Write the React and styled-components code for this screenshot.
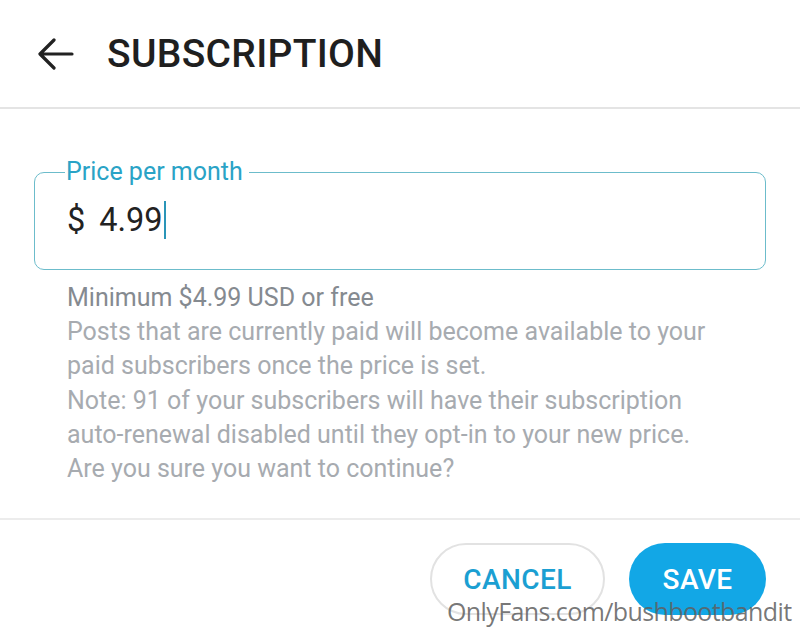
import React from "react";
import styled, { createGlobalStyle } from "styled-components";

const Global = createGlobalStyle`
  html, body { margin: 0; padding: 0; background: #fff; }
  body { font-family: Roboto, "Liberation Sans", sans-serif; }
`;

const Page = styled.div`
  position: relative;
  width: 800px;
  height: 637px;
  overflow: hidden;
  background: #fff;
`;

const Header = styled.div`
  display: flex;
  align-items: center;
  height: 109px;
  padding-left: 38px;
  border-bottom: 2px solid #e4e4e4;
  box-sizing: border-box;
`;

const BackIcon = styled.svg`
  width: 36px;
  height: 34px;
  margin-right: 33px;
`;

const Title = styled.h1`
  margin: 0;
  font-size: 39px;
  font-weight: 500;
  color: #1f1f1f;
  letter-spacing: 0.3px;
`;

const Body = styled.div`
  padding: 50px 34px 0 34px;
  height: 411px;
  box-sizing: border-box;
  border-bottom: 2px solid #ececec;
`;

const Field = styled.fieldset`
  margin: 0;
  height: 111px;
  box-sizing: border-box;
  border: 1.5px solid #6cbccb;
  border-radius: 10px;
  padding: 0 0 0 32px;
`;

const Legend = styled.legend`
  padding: 0 6px 0 1px;
  margin-left: -2px;
  font-size: 25px;
  color: #2aa3c6;
  line-height: 26px;
`;

const Value = styled.div`
  display: flex;
  align-items: center;
  margin-top: 16px;
  font-size: 32.5px;
  color: #222;
`;

const Amount = styled.span`
  margin-left: 14px;
`;

const Caret = styled.span`
  display: inline-block;
  width: 2px;
  height: 38px;
  background: #2a95b8;
  margin-left: 1px;
`;

const Help = styled.div`
  padding: 11px 0 0 33px;
  font-size: 25px;
  line-height: 34.2px;
`;

const HelpLine = styled.div`
  color: ${(p) => (p.$dark ? "#858a90" : "#a7abb0")};
`;

const Footer = styled.div`
  display: flex;
  justify-content: flex-end;
  gap: 24px;
  padding: 23px 34px 0 0;
`;

const Button = styled.button`
  height: 72px;
  border-radius: 36px;
  font-family: Roboto, "Liberation Sans", sans-serif;
  font-size: 28px;
  font-weight: 500;
  letter-spacing: 0.4px;
  padding: 0;
  width: ${(p) => (p.$primary ? "137px" : "175px")};
  background: ${(p) => (p.$primary ? "#12a7e6" : "#fff")};
  color: ${(p) => (p.$primary ? "#fff" : "#1b9fd2")};
  border: ${(p) => (p.$primary ? "none" : "2px solid #e2e2e2")};
`;

const Watermark = styled.div`
  position: absolute;
  left: 447px;
  top: 596px;
  font-family: "Open Sans", "DejaVu Sans", sans-serif;
  font-size: 25px;
  line-height: 30px;
  letter-spacing: -0.6px;
  color: rgba(95, 95, 95, 0.85);
  white-space: nowrap;
`;

export default function App() {
  return (
    <Page>
      <Global />
      <Header>
        <BackIcon viewBox="0 0 36 34" fill="none" stroke="#222" strokeWidth="3.2" strokeLinecap="round" strokeLinejoin="round">
          <path d="M34 17H3M16 3L2 17l14 14" />
        </BackIcon>
        <Title>SUBSCRIPTION</Title>
      </Header>
      <Body>
        <Field>
          <Legend>Price per month</Legend>
          <Value>
            $<Amount>4.99</Amount>
            <Caret />
          </Value>
        </Field>
        <Help>
          <HelpLine $dark>Minimum $4.99 USD or free</HelpLine>
          <HelpLine>Posts that are currently paid will become available to your</HelpLine>
          <HelpLine>paid subscribers once the price is set.</HelpLine>
          <HelpLine>Note: 91 of your subscribers will have their subscription</HelpLine>
          <HelpLine>auto-renewal disabled until they opt-in to your new price.</HelpLine>
          <HelpLine>Are you sure you want to continue?</HelpLine>
        </Help>
      </Body>
      <Footer>
        <Button>CANCEL</Button>
        <Button $primary>SAVE</Button>
      </Footer>
      <Watermark>OnlyFans.com/bushbootbandit</Watermark>
    </Page>
  );
}
